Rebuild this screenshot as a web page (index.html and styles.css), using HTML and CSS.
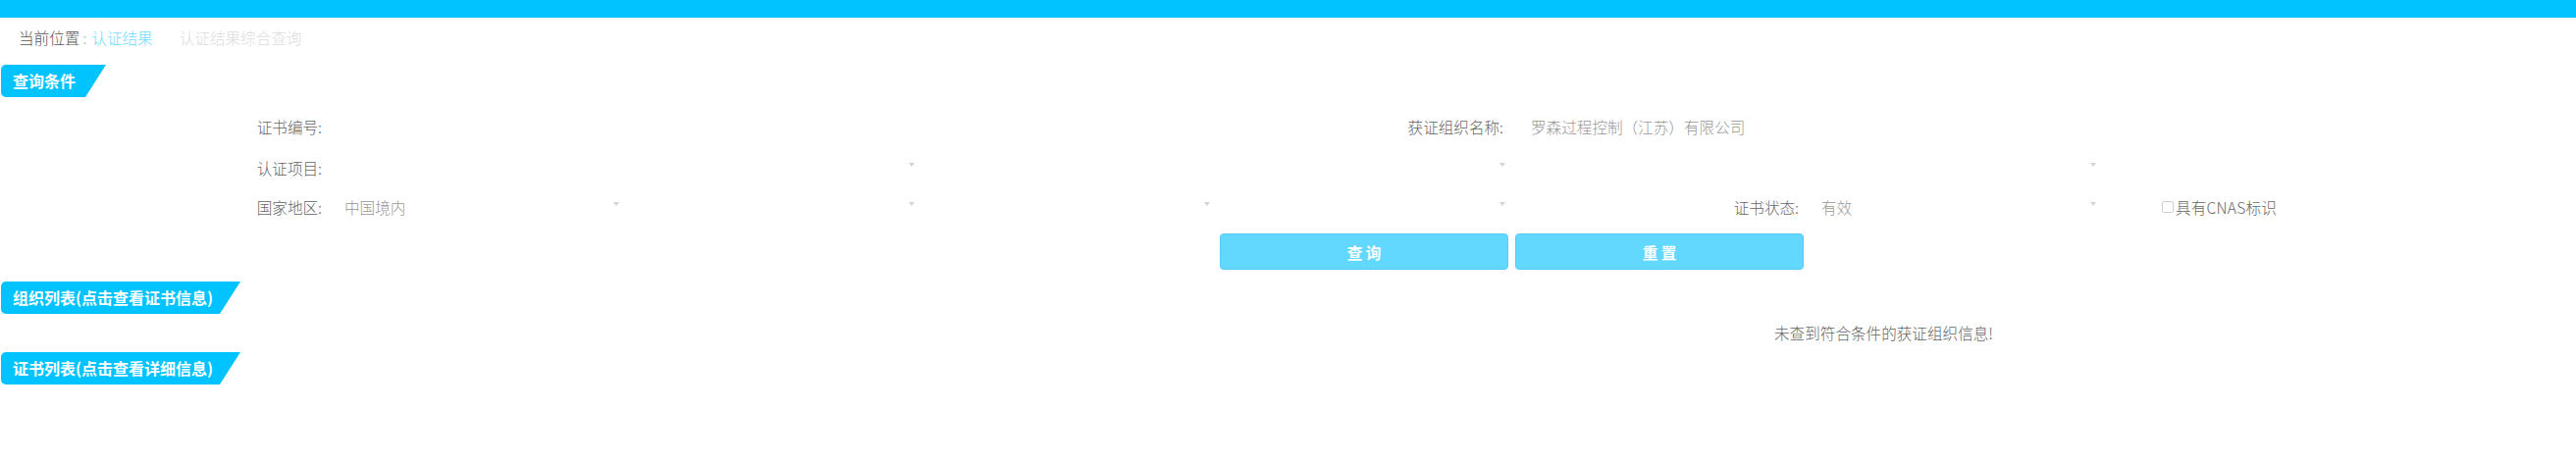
FILE: index.html
```html
<!DOCTYPE html>
<html lang="zh-CN">
<head>
<meta charset="utf-8">
<title>认证结果综合查询</title>
<link rel="stylesheet" href="styles.css">
</head>
<body>
<div class="topbar"></div>
<div class="crumb">
  <span class="crumb-label">当前位置</span><span class="crumb-colon">:</span><span class="crumb-link">认证结果</span><span class="crumb-current">认证结果综合查询</span>
</div>

<div class="tab tab-query">查询条件</div>

<div class="form">
  <div class="cell label">证书编号:</div>
  <div class="cell input span3"></div>
  <div class="cell label">获证组织名称:</div>
  <div class="cell input input-value span3">罗森过程控制（江苏）有限公司</div>

  <div class="cell label">认证项目:</div>
  <div class="cell select span2"><span class="arrow"></span></div>
  <div class="cell select span2"><span class="arrow"></span></div>
  <div class="cell select span2"><span class="arrow"></span></div>
  <div class="cell"></div>

  <div class="cell label">国家地区:</div>
  <div class="cell select">中国境内<span class="arrow"></span></div>
  <div class="cell select"><span class="arrow"></span></div>
  <div class="cell select"><span class="arrow"></span></div>
  <div class="cell select"><span class="arrow"></span></div>
  <div class="cell label">证书状态:</div>
  <div class="cell select">有效<span class="arrow"></span></div>
  <div class="cell check-cell"><span class="checkbox"></span><span class="check-text">具有CNAS标识</span></div>

  <div class="cell btn-cell btn-first"><button class="btn" type="button">查 询</button></div>
  <div class="cell btn-cell"><button class="btn" type="button">重 置</button></div>
</div>

<div class="tab tab-org">组织列表(点击查看证书信息)</div>
<div class="empty">未查到符合条件的获证组织信息!</div>
<div class="tab tab-cert">证书列表(点击查看详细信息)</div>
</body>
</html>
```

FILE: styles.css
```css
* { box-sizing: border-box; }

body {
  margin: 0;
  background: #fff;
  color: #666;
  font-family: "Noto Sans CJK SC", "Noto Sans", sans-serif;
  font-size: 15.6px;
  font-weight: 300;
}

.topbar {
  height: 18px;
  background: #00c3ff;
}

.crumb {
  display: flex;
  margin-top: 10px;
  padding-left: 19px;
  height: 20px;
  line-height: 20px;
}

.crumb-label { color: #555; }
.crumb-colon { color: #9fb4c0; margin: 0 5px 0 3px; }
.crumb-link { color: #6fdcff; }
.crumb-current { color: #dcdcdc; margin-left: 27px; }

.tab {
  margin-left: 1px;
  height: 33px;
  line-height: 33px;
  padding-left: 12px;
  color: #fff;
  font-size: 16px;
  font-weight: bold;
  background: #00c3ff;
  border-radius: 5px 0 0 5px;
  clip-path: polygon(0 0, 100% 0, calc(100% - 21px) 100%, 0 100%);
  white-space: nowrap;
}

.tab-query { width: 107px; margin-top: 18px; }
.tab-org { width: 244px; margin-top: 13px; }
.tab-cert { width: 244px; }

.form {
  display: grid;
  grid-template-columns: repeat(8, 301px);
  grid-template-rows: 44px 40px 40px 43px;
  margin-left: 32px;
  margin-top: 8px;
}

.cell {
  display: flex;
  align-items: center;
  white-space: nowrap;
}

.span2 { grid-column: span 2; }
.span3 { grid-column: span 3; }

.label {
  justify-content: flex-end;
  padding-right: 5px;
  color: #666;
}

.input { padding-left: 23px; }
.input-value { color: #999; }

.select {
  padding-left: 18px;
  padding-right: 3px;
  color: #999;
}

.arrow {
  margin-left: auto;
  margin-bottom: 7px;
  width: 0;
  height: 0;
  border-left: 3px solid transparent;
  border-right: 3px solid transparent;
  border-top: 4px solid #d3d3d3;
}

.check-cell { padding-left: 64px; }

.checkbox {
  width: 12px;
  height: 12px;
  border: 1px solid #cfcfcf;
  border-radius: 2px;
  margin-right: 2px;
}

.check-text { color: #666; letter-spacing: 0.2px; }

.btn-cell {
  align-items: flex-start;
  padding-left: 7px;
  padding-top: 7px;
}

.btn-first { grid-column: 5; }

.btn {
  width: 100%;
  height: 37px;
  margin: 0;
  padding: 0;
  background: #63d8ff;
  border: 1px solid #55cbf7;
  border-radius: 4px;
  color: #fff;
  font-family: inherit;
  font-size: 15.6px;
  font-weight: bold;
}

.empty {
  height: 39px;
  line-height: 39px;
  padding-left: 1808px;
  color: #666;
  white-space: nowrap;
}
```
